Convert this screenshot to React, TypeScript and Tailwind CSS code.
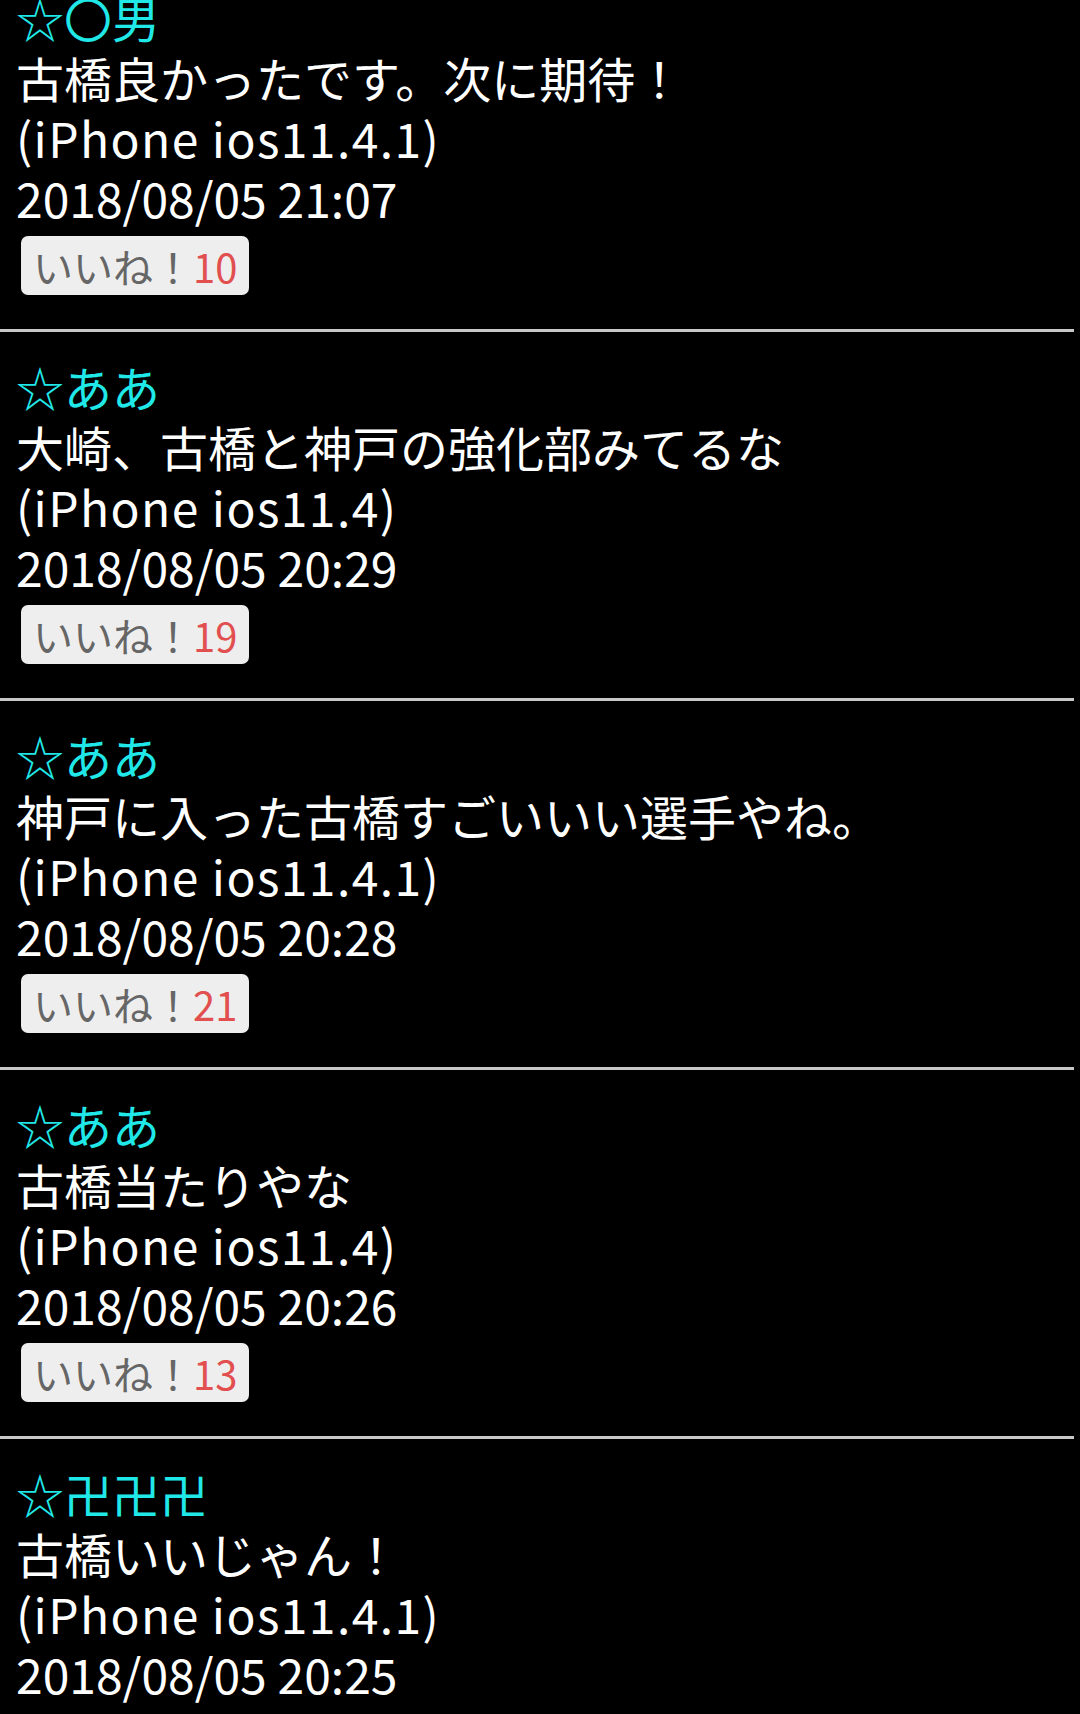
import React from "react";

type Comment = {
  name: string;
  body: string;
  device: string;
  date: string;
  likes?: number;
};

const comments: Comment[] = [
  { name: "☆〇男", body: "古橋良かったです。次に期待！", device: "(iPhone ios11.4.1)", date: "2018/08/05 21:07", likes: 10 },
  { name: "☆ああ", body: "大崎、古橋と神戸の強化部みてるな", device: "(iPhone ios11.4)", date: "2018/08/05 20:29", likes: 19 },
  { name: "☆ああ", body: "神戸に入った古橋すごいいい選手やね。", device: "(iPhone ios11.4.1)", date: "2018/08/05 20:28", likes: 21 },
  { name: "☆ああ", body: "古橋当たりやな", device: "(iPhone ios11.4)", date: "2018/08/05 20:26", likes: 13 },
  { name: "☆卍卍卍", body: "古橋いいじゃん！", device: "(iPhone ios11.4.1)", date: "2018/08/05 20:25" },
];

const font = {
  fontFamily: '"Noto Sans CJK JP", sans-serif',
};

function CommentItem({ c }: { c: Comment }) {
  return (
    <div className="border-b-[3px] border-[#c8c8c8] mr-[6px] pt-[24px] pb-[34px] pl-[16px]">
      <div className="text-[48px] leading-[60px] text-[#20e8e8]">{c.name}</div>
      <div className="text-[48px] leading-[60px] text-white">{c.body}</div>
      <div className="text-[48px] leading-[60px] text-white tracking-[1.4px]">{c.device}</div>
      <div className="text-[48px] leading-[60px] text-white">{c.date}</div>
      {c.likes !== undefined && (
        <div className="mt-[9px] ml-[5px] inline-flex items-center h-[59px] px-[12px] rounded-[7px] bg-[#eeeeee] text-[40px]">
          <span className="text-[#666666]">いいね！</span>
          <span className="text-[#e24f4f]">{c.likes}</span>
        </div>
      )}
    </div>
  );
}

export default function App() {
  return (
    <div className="w-[1080px] h-[1714px] bg-black overflow-hidden" style={font}>
      <div className="-mt-[37px]">
        {comments.map((c, i) => (
          <CommentItem key={i} c={c} />
        ))}
      </div>
    </div>
  );
}
